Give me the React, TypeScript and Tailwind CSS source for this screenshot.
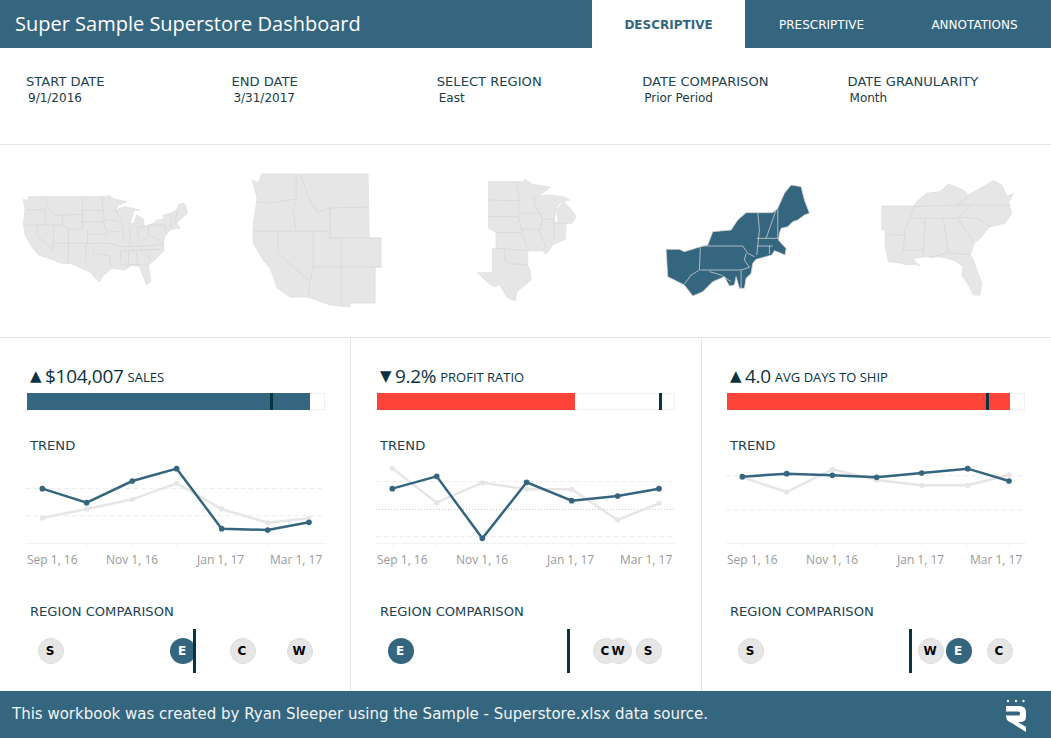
const BLUE = "#35667f";
const XS = [127, 260, 397, 530, 665, 803, 927];

// Region outlines are in the coordinates of the map's own viewBox.
const MAPS = [
  {
    viewBox: "0 -45 630 576",
    fill: "#e6e6e6",
    line: "#d6d6d6",
    outline:
      "M70,118 L85,122 85,110 320,110 325,105 345,118 380,125 355,135 345,150 375,140 395,145 420,150 402,150 390,190 400,192 410,165 430,178 432,200 445,195 460,190 470,180 490,178 490,165 510,160 530,150 535,135 548,130 556,135 562,160 545,175 530,188 540,205 515,208 505,215 495,225 490,250 492,270 470,295 445,315 452,365 440,375 425,340 420,320 395,315 375,330 335,325 305,350 300,365 285,355 270,335 255,330 235,320 210,310 185,310 155,298 115,285 95,260 75,225 70,190 75,150 Z",
    lines: [
      "M80,150 L135,148", "M137,112 L140,135 150,150 165,165 187,165", "M135,148 L135,195", "M75,195 L187,195",
      "M247,112 L247,163", "M247,150 L307,152", "M187,165 L247,163 247,208 205,208 187,195 187,165", "M247,185 L310,185 320,215",
      "M110,197 L110,225 158,268", "M158,268 L162,197", "M162,250 L262,250 262,208", "M205,208 L205,308", "M258,250 L258,305",
      "M262,222 L322,222", "M262,250 L330,250", "M280,262 L280,280 330,288 332,322", "M305,110 L312,180", "M312,180 L360,185",
      "M345,145 L365,185 372,245", "M325,215 L360,215", "M330,250 L370,262", "M370,260 L490,255", "M368,272 L480,268",
      "M360,305 L362,270", "M385,272 L385,310", "M408,270 L412,312", "M438,280 L450,300", "M388,200 L390,255", "M412,200 L415,235",
      "M445,195 L445,225 435,240 415,240", "M415,200 L445,198", "M450,195 L495,195", "M495,195 L500,225", "M360,315 L440,312",
      "M510,165 L515,205", "M530,155 L525,190", "M490,250 L450,225",
    ],
  },
  {
    viewBox: "210 145 210 192",
    fill: "#e6e6e6",
    line: "#d6d6d6",
    outline:
      "M252,180 L258,183 262,174 368,174 369,238 381,238 381,267 375,267 375,303 350,303 350,307 330,305 308,297 290,297 277,288 270,268 263,260 253,243 253,227 257,198 Z",
    lines: [
      "M257,202 L270,203 296,199", "M296,174 L296,200 293,212 296,231", "M253,231 L329,231", "M300,174 L310,200 317,212 330,208",
      "M330,208 L368,207", "M330,208 L330,238 381,238", "M313,232 L313,267", "M341,238 L341,306", "M313,267 L381,267",
      "M278,232 L278,253 310,282 313,267", "M310,282 L308,297",
    ],
  },
  {
    viewBox: "210 -45 630 576",
    fill: "#e6e6e6",
    line: "#d6d6d6",
    outline:
      "M415,65 L520,65 525,58 545,72 600,82 570,105 552,110 600,105 640,110 660,120 635,125 620,140 612,185 625,190 620,150 640,125 660,145 678,170 665,190 648,190 645,238 610,253 590,280 580,280 585,273 533,273 533,315 540,330 543,360 525,375 500,395 495,423 470,412 450,375 430,380 410,365 382,338 427,338 427,265 438,265 438,218 415,205 Z",
    lines: [
      "M415,120 L505,122", "M415,170 L505,170 518,218 530,265", "M500,65 L507,120 505,160 570,160", "M552,110 L555,140 570,160 578,180",
      "M510,208 L568,208", "M578,178 L612,178", "M438,218 L518,218", "M578,180 L568,215 590,265", "M612,180 L612,240",
      "M438,265 L533,272", "M463,270 L463,300 490,312 533,315", "M612,190 L648,190",
    ],
  },
  {
    viewBox: "-30 -45 630 576",
    fill: BLUE,
    line: "#d4d4d4",
    outline:
      "M75,268 L115,268 130,275 178,260 200,255 215,215 270,210 290,180 315,158 395,158 410,145 430,100 450,75 480,80 490,120 505,160 490,165 470,180 455,185 440,200 420,205 415,220 412,240 425,255 435,265 432,285 420,280 400,272 392,285 345,298 335,310 330,340 315,355 310,385 295,385 285,350 280,375 265,378 250,350 215,365 185,395 155,408 130,375 80,350 Z",
    lines: [
      "M178,260 L175,330 150,345 130,372", "M180,258 L305,258 320,280 340,290", "M315,280 L310,300 325,322 300,330 178,330",
      "M350,158 L355,210 347,285", "M405,150 L375,235", "M410,145 L410,235", "M347,235 L410,235", "M347,258 L395,258",
      "M205,335 L240,345 270,365", "M300,330 L300,385", "M385,258 L385,282",
    ],
  },
  {
    viewBox: "603 -45 630 576",
    fill: "#e6e6e6",
    line: "#d6d6d6",
    outline:
      "M725,138 L820,138 835,120 860,100 900,95 925,72 970,90 985,105 1020,85 1060,62 1085,75 1100,110 1120,100 1105,130 1115,160 1095,190 1050,200 1020,235 1003,250 990,285 1000,300 1010,330 1025,370 1020,405 1000,405 985,375 965,345 970,320 945,303 920,295 895,290 870,292 860,290 820,295 825,305 840,318 825,312 800,315 775,308 745,305 742,290 735,255 735,210 725,210 Z",
    lines: [
      "M820,140 L975,135 1112,135", "M950,135 L985,110", "M810,175 L955,175", "M990,138 L955,172 975,172 1010,175 1050,200",
      "M820,140 L795,210 790,270 850,270", "M855,178 L850,285", "M910,178 L925,278 990,285", "M870,292 L925,278",
      "M955,178 L1000,245", "M735,225 L795,225",
    ],
  },
];

const PANELS = [
  {
    arrow: "▲", value: "$104,007", label: "SALES", width: "w-[350px]", shift: "ml-0", fillColor: BLUE, fillWidth: 283, marker: 243,
    blue: [446, 488, 423, 386, 566, 570, 547], gray: [534, 507, 478, 430, 507, 548, 535], dashes: [446, 527], dotted: [] as number[],
    regions: [{ n: "S", x: 51 }, { n: "E", x: 183 }, { n: "C", x: 243 }, { n: "W", x: 300 }], line: 194,
  },
  {
    arrow: "▼", value: "9.2%", label: "PROFIT RATIO", width: "w-[351px]", shift: "-ml-px", fillColor: "#fe4338", fillWidth: 198, marker: 282,
    blue: [446, 409, 595, 427, 482, 468, 446], gray: [385, 488, 428, 448, 448, 540, 490], dashes: [425, 590], dotted: [508],
    regions: [{ n: "E", x: 51 }, { n: "C", x: 256 }, { n: "W", x: 269 }, { n: "S", x: 299 }], line: 218,
  },
  {
    arrow: "▲", value: "4.0", label: "AVG DAYS TO SHIP", width: "w-[350px]", shift: "-ml-[2px]", fillColor: "#fe4338", fillWidth: 283, marker: 259,
    blue: [410, 401, 406, 412, 399, 386, 423], gray: [412, 456, 388, 420, 436, 436, 405], dashes: [407, 510], dotted: [] as number[],
    regions: [{ n: "S", x: 51 }, { n: "W", x: 231 }, { n: "E", x: 259 }, { n: "C", x: 300 }], line: 210,
  },
];

const FILTERS = [
  ["START DATE", "9/1/2016"],
  ["END DATE", "3/31/2017"],
  ["SELECT REGION", "East"],
  ["DATE COMPARISON", "Prior Period"],
  ["DATE GRANULARITY", "Month"],
];

const RegionMap = ({ map }: { map: (typeof MAPS)[number] }) => {
  const stroke = map.viewBox.includes("145") ? 0.75 : 2.25;
  return (
    <svg className="w-[210.2px] h-[192px]" viewBox={map.viewBox}>
      <path d={map.outline} fill={map.fill} stroke={map.fill === BLUE ? "#d4d4d4" : "#dedede"} strokeWidth={stroke} strokeLinejoin="round" />
      {map.lines.map((d) => (
        <path key={d} d={d} fill="none" stroke={map.line} strokeWidth={stroke} />
      ))}
    </svg>
  );
};

const TrendChart = ({ blue, gray, dashes, dotted }: { blue: number[]; gray: number[]; dashes: number[]; dotted: number[] }) => {
  const toPoints = (ys: number[]) => ys.map((y, i) => `${XS[i]},${y}`).join(" ");
  return (
    <svg className="block w-[350px] h-[88px]" viewBox="0 360 1050 264">
      {dashes.map((y) => (
        <line key={y} x1="78" x2="975" y1={y} y2={y} stroke="#ececec" strokeWidth="3" strokeDasharray="14 9" />
      ))}
      {dotted.map((y) => (
        <line key={y} x1="78" x2="975" y1={y} y2={y} stroke="#c4c4c4" strokeWidth="3" strokeDasharray="3 6" />
      ))}
      <line x1="78" x2="978" y1="610" y2="610" stroke="#f1f1f1" strokeWidth="3" />
      {XS.map((x) => (
        <line key={x} x1={x} x2={x} y1="610" y2="620" stroke="#f3f3f3" strokeWidth="3" />
      ))}
      <polyline points={toPoints(gray)} fill="none" stroke="#e6e6e6" strokeWidth="7.5" />
      {gray.map((y, i) => (
        <circle key={i} cx={XS[i]} cy={y} r="8" fill="#e6e6e6" />
      ))}
      <polyline points={toPoints(blue)} fill="none" stroke={BLUE} strokeWidth="7.5" />
      {blue.map((y, i) => (
        <circle key={i} cx={XS[i]} cy={y} r="8.5" fill={BLUE} />
      ))}
    </svg>
  );
};

const Panel = ({ panel }: { panel: (typeof PANELS)[number] }) => (
  <div className={`${panel.width} shrink-0 first:border-l-0 border-l border-[#e6e6e6]`}>
    <div className={`${panel.shift} pt-[25px] w-[350px]`}>
      <div className="h-[26px] pl-[30px] flex items-center text-[#0a3341]">
        <span className="text-[15px] w-[15px] font-['DejaVu_Sans',sans-serif]">{panel.arrow}</span>
        <span className="text-[19px] tracking-[-0.3px] font-['Open_Sans',sans-serif]">{panel.value}</span>
        <span className="text-[13px] ml-[4px] mt-[3px] font-['Open_Sans',sans-serif]">{panel.label}</span>
      </div>
      <div className="relative mt-[4px] ml-[27px] w-[298px] h-[17px] border-r border-t border-b border-[#f0f0f0]">
        <div className="absolute left-0 -top-px h-[17px]" style={{ width: panel.fillWidth, backgroundColor: panel.fillColor }} />
        <div className="absolute -top-px w-[3px] h-[17px] bg-[#0a3341]" style={{ left: panel.marker }} />
      </div>
      <div className="mt-[28px] pl-[30px] h-[16px] leading-[16px] text-[13.1px] text-[#1c4452] font-['DejaVu_Sans',sans-serif]">TREND</div>
      <div className="mt-[6px]">
        <TrendChart blue={panel.blue} gray={panel.gray} dashes={panel.dashes} dotted={panel.dotted} />
      </div>
      <div className="mt-[4px] pl-[27px] flex h-[16px] leading-[16px] text-[12px] text-[#9a9a9a] font-['Open_Sans',sans-serif]">
        <span className="w-[79px]">Sep 1, 16</span>
        <span className="w-[91px]">Nov 1, 16</span>
        <span className="w-[73px]">Jan 1, 17</span>
        <span>Mar 1, 17</span>
      </div>
      <div className="mt-[36px] pl-[30px] h-[16px] leading-[16px] text-[13.1px] text-[#1c4452] font-['DejaVu_Sans',sans-serif]">REGION COMPARISON</div>
      <div className="relative mt-[9px] h-[44px]">
        {panel.regions.map((r) => (
          <div
            key={r.n}
            className={`absolute top-[9px] -ml-[13px] w-[26px] h-[26px] rounded-full ${r.n === "E" ? "bg-[#35667f]" : "bg-[#e6e6e6] border border-[#dddddd]"}`}
            style={{ left: r.x }}
          />
        ))}
        {panel.regions.map((r) => (
          <div
            key={r.n}
            className={`absolute top-[9px] -ml-[14px] w-[26px] h-[26px] flex items-center justify-center text-[12px] font-bold font-['DejaVu_Sans',sans-serif] ${r.n === "E" ? "text-white" : "text-black"}`}
            style={{ left: r.x }}
          >
            {r.n}
          </div>
        ))}
        <div className="absolute top-0 w-[3px] h-[44px] bg-[#0a3341]" style={{ left: panel.line - 1 }} />
      </div>
    </div>
  </div>
);

const App = () => {
  return (
    <div className="w-[1051px] h-[738px] overflow-hidden bg-white flex flex-col">
      <div className="h-[48px] bg-[#35667f] flex items-stretch shrink-0">
        <div className="w-[592px] pl-[15px] flex items-center text-white text-[20px] font-['Open_Sans',sans-serif]">
          Super Sample Superstore Dashboard
        </div>
        <div className="w-[153px] pt-px bg-white flex items-center justify-center text-[#35667f] text-[12px] font-bold font-['DejaVu_Sans',sans-serif]">
          DESCRIPTIVE
        </div>
        <div className="w-[153px] pt-px flex items-center justify-center text-white text-[12px] font-['DejaVu_Sans',sans-serif]">
          PRESCRIPTIVE
        </div>
        <div className="w-[153px] pt-px flex items-center justify-center text-white text-[12px] font-['DejaVu_Sans',sans-serif]">
          ANNOTATIONS
        </div>
      </div>

      <div className="h-[97px] shrink-0 border-b border-[#e6e6e6] pl-[26px] pt-[26px] flex font-['DejaVu_Sans',sans-serif]">
        {FILTERS.map(([label, value]) => (
          <div key={label} className="w-[205.4px] shrink-0">
            <div className="h-[16px] leading-[16px] text-[13.1px] text-[#1c4452]">{label}</div>
            <div className="pl-[2px] h-[16px] leading-[16px] text-[12px] text-[#1c3a46]">{value}</div>
          </div>
        ))}
      </div>

      <div className="h-[193px] shrink-0 border-b border-[#e6e6e6] flex">
        {MAPS.map((map) => (
          <RegionMap key={map.viewBox} map={map} />
        ))}
      </div>

      <div className="h-[353px] shrink-0 flex">
        {PANELS.map((panel) => (
          <Panel key={panel.label} panel={panel} />
        ))}
      </div>

      <div className="h-[47px] shrink-0 bg-[#35667f] pl-[12px] pr-[22px] flex items-center justify-between text-[#f2f5f7] text-[15px] font-['DejaVu_Sans',sans-serif]">
        <span>This workbook was created by Ryan Sleeper using the Sample - Superstore.xlsx data source.</span>
        <svg width="24" height="36" viewBox="0 0 24 36">
          <circle cx="3" cy="4" r="1.2" fill="#e8eef2" />
          <circle cx="11" cy="4" r="1.2" fill="#e8eef2" />
          <circle cx="18.5" cy="4" r="1.2" fill="#e8eef2" />
          <path d="M1,9 H14 Q21,9 21,15 V20 Q21,25 15,25 H13 L21,30 V35 L6,25.5 Q1,24 1,19 V18.5 H13 Q15,18.5 15,17 V16 Q15,14.5 13,14.5 H1 Z" fill="#ffffff" />
        </svg>
      </div>
    </div>
  );
};

export default App;
